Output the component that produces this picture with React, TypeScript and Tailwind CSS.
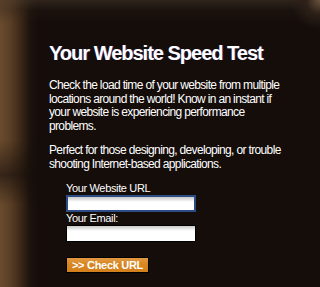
export default function App() {
  return (
    <div
      className="relative w-[320px] h-[287px] overflow-hidden bg-[#140d0a] text-white"
      style={{ fontFamily: '"Liberation Sans", Arial, sans-serif' }}
    >
      {/* wood texture at the edges */}
      <div className="absolute inset-0 bg-[linear-gradient(90deg,#6a4b2e_0px,#5b3f26_10px,#3e2a18_20px,#1d130d_30px,transparent_38px)]" />
      <div className="absolute inset-0 bg-[linear-gradient(180deg,rgba(70,55,42,0.55)_0px,rgba(40,30,22,0.3)_10px,transparent_24px)]" />
      <div className="absolute inset-0 bg-[radial-gradient(circle_at_100%_0%,#6a543d_0px,#2c2018_14px,transparent_30px)]" />
      <div className="absolute inset-0 bg-[linear-gradient(180deg,transparent_140px,rgba(20,13,10,0.6)_175px,transparent_205px)]" />

      <div className="relative pl-[49px] pt-[41px]">
        <h1 className="text-[20px] font-bold leading-[24px] tracking-[-1px] [text-shadow:1px_0_0_#3a2a60]">
          Your Website Speed Test
        </h1>

        <p className="mt-[14px] w-[236px] text-[12px] leading-[13.5px] tracking-[-0.65px]">
          Check the load time of your website from multiple locations around the world! Know in an instant if your
          website is experiencing performance problems.
        </p>
        <p className="mt-[11px] w-[236px] text-[12px] leading-[13.5px] tracking-[-0.65px]">
          Perfect for those designing, developing, or trouble shooting Internet-based applications.
        </p>

        <form className="mt-[11px] ml-[17px] flex flex-col items-start text-[11px] tracking-[-0.35px]">
          <label className="h-[13px] leading-[13px]">Your Website URL</label>
          <input
            type="text"
            className="w-[130px] h-[17px] bg-[linear-gradient(#c8c8c8,#ffffff_5px)] border-2 border-[#2c4c86] outline-none"
          />
          <label className="h-[13px] leading-[13px]">Your Email:</label>
          <input
            type="text"
            className="w-[130px] h-[17px] bg-[linear-gradient(#c8c8c8,#ffffff_5px)] border border-black outline-none"
          />
          <button
            type="button"
            className="mt-[15px] w-[83px] h-[16px] border border-black bg-[linear-gradient(#e29a44,#d8861f_45%,#d2801d)] text-[11px] font-bold leading-[14px] text-white tracking-[-0.3px]"
          >
            &gt;&gt; Check URL
          </button>
        </form>
      </div>
    </div>
  )
}
